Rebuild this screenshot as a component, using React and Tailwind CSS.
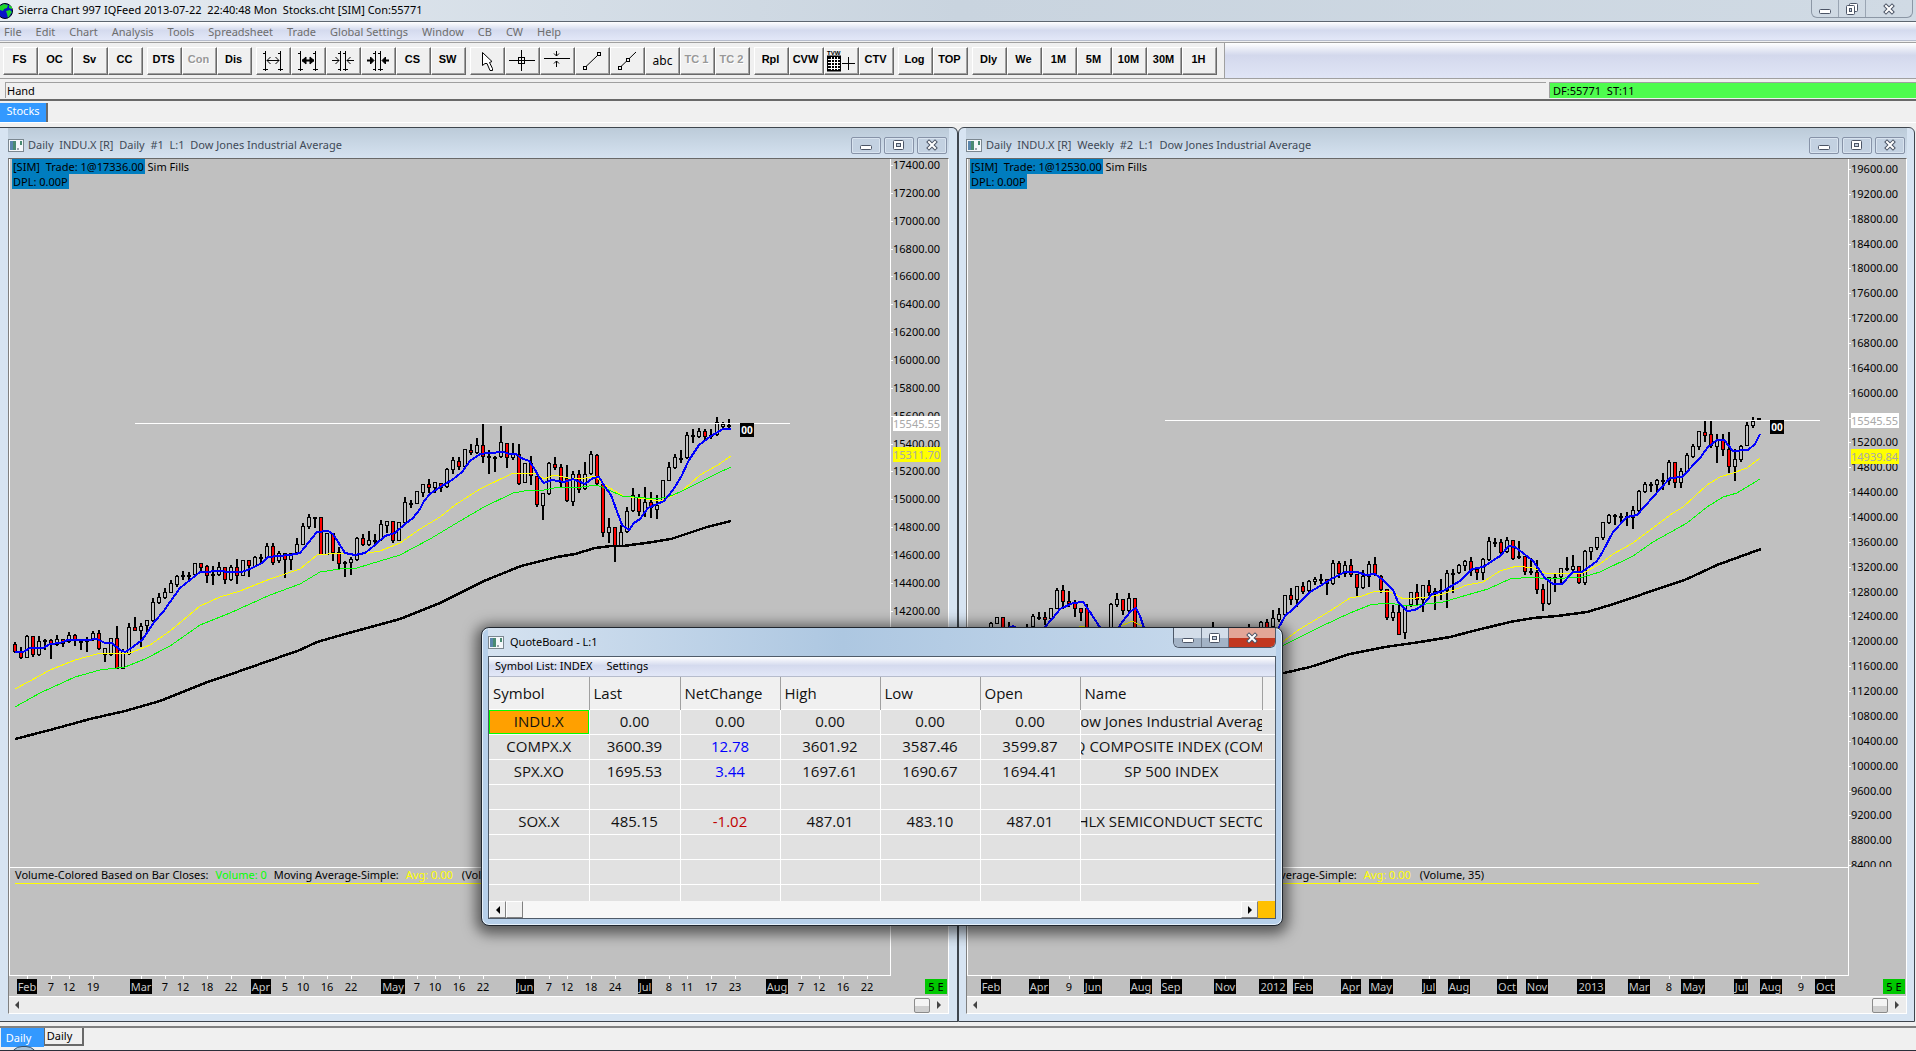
import React from "react";

const LEFT_CANDLES = `642 644 651 652 r|647 651 657 658 r|635 636 657 657|636 636 654 656 r|636 641 654 655|639 640 641 649|639 640 644 658 r|635 639 644 645|639 639 643 646 r|632 635 641 642|634 635 640 645 r|640 641 642 649|637 640 641 651|631 633 639 640|630 633 648 649 r|648 648 654 661|638 638 654 655|626 638 668 668 r|649 651 668 668|623 627 653 654|617 627 630 630 r|623 626 630 646|620 620 625 633|598 602 620 621|593 597 602 603|588 592 597 598|580 583 592 592|575 576 584 586|571 575 576 579|572 575 576 579|563 563 574 575|563 563 567 571 r|565 566 575 582 r|566 574 575 584|562 567 574 575|567 567 579 583 r|565 567 579 580|559 567 575 583 r|560 560 575 575|560 560 565 576 r|556 557 566 566|554 557 558 563|543 546 557 558|543 546 562 564 r|551 553 560 562|553 553 559 577 r|553 553 559 569|538 544 552 553|523 526 544 544|514 517 526 528|517 517 518 527|517 517 554 554 r|533 533 554 554|533 533 552 560 r|547 552 563 568 r|561 562 563 576|557 559 562 574|537 538 559 560|534 538 544 545 r|531 540 544 545|534 540 541 543|520 524 539 540|521 521 525 532|521 521 540 542 r|522 522 540 540|497 502 522 523|500 503 504 507|491 491 503 503|484 484 492 496|479 484 487 492 r|482 482 487 492|483 483 487 491 r|468 469 486 487|457 460 469 473|457 461 466 469 r|449 449 466 467|444 450 452 454 r|438 445 452 453|424 445 456 462 r|450 456 457 473|456 457 458 471|426 442 456 457|443 443 457 467 r|443 453 457 459|444 454 483 484 r|463 463 482 482|456 463 475 484 r|476 476 504 506 r|493 493 505 519|462 463 493 494|457 464 467 469 r|464 467 482 487 r|465 478 500 501 r|471 474 501 505|470 474 489 492 r|462 474 488 489|451 454 473 474|454 455 483 484 r|484 484 532 536 r|518 527 532 542|527 527 546 561 r|525 532 545 545|507 511 531 532|488 495 510 511|494 497 511 515 r|487 502 511 516|492 502 507 517 r|495 505 509 518|480 480 500 500|462 467 480 480|454 457 467 468|450 458 459 462|432 435 457 458|429 435 436 442|428 431 436 437|429 431 436 440 r|429 435 436 438|417 422 434 435|422 424 426 429|419 425 426 427`;

const RIGHT_CANDLES = `622 623 635 640|617 617 623 623|617 617 632 635 r|622 630 631 635|626 628 636 637|628 630 634 638|624 630 634 636|614 616 626 627|612 617 618 619|612 617 619 624 r|608 608 618 620|588 590 608 608|585 590 601 608 r|591 601 603 606 r|600 602 608 616 r|608 608 612 620 r|604 608 632 635 r|630 632 650 655 r|640 642 660 662|636 638 650 655|603 604 630 632|593 599 604 606|599 599 610 614 r|593 598 610 612|598 598 632 635 r|630 632 660 670 r|650 655 670 680|650 655 670 680 r|650 655 670 680|650 655 670 680 r|650 655 670 680|650 655 670 680 r|650 655 670 680|650 655 670 680|650 655 670 680 r|640 645 660 670|635 640 655 660|622 630 640 645|630 634 645 650 r|632 636 645 650|632 636 645 650 r|632 636 640 645|630 634 640 645|624 630 636 640 r|630 632 636 640|621 622 635 635|619 622 627 628 r|610 618 626 627|608 614 619 621|595 595 614 614|588 595 599 604 r|586 586 599 606|582 586 591 593 r|580 581 590 591|577 579 581 584|574 579 580 583|579 579 583 594 r|560 563 583 584|561 563 573 577 r|561 565 573 576|559 565 574 576 r|574 574 587 596 r|570 576 587 588|561 564 576 586|557 564 574 575 r|575 576 589 592 r|589 589 617 619 r|605 612 617 620|603 612 634 634 r|605 605 632 638|592 592 604 606|584 592 599 605 r|585 585 599 611|580 585 592 595 r|588 591 592 609|579 590 591 599|570 573 590 607|569 573 574 592|564 565 572 573|560 561 565 570|557 561 570 575 r|569 569 572 579 r|558 559 572 579|537 541 559 560|538 542 543 546|539 542 552 554 r|537 540 551 552|540 540 558 559 r|541 556 557 558|556 556 571 574 r|558 571 572 574|560 572 589 593 r|584 589 603 610 r|577 577 603 604|574 577 578 591|568 568 576 583|557 568 569 570|555 566 569 570|566 566 582 583 r|550 551 582 584|547 547 551 559|537 537 547 549|522 522 537 539|514 515 522 523|514 515 516 524|513 516 517 522|512 516 517 525|506 510 517 528|490 491 510 511|482 484 491 492|482 484 485 491|479 480 484 491|473 480 481 489|460 462 480 484|462 462 482 487 r|468 471 482 487|453 455 471 472|444 446 456 457|431 431 446 449|421 432 435 441 r|421 434 445 447 r|434 440 446 462|434 440 449 455 r|432 449 466 472 r|449 459 466 480|445 446 459 461|422 425 445 445|417 421 425 427|418 418 419 420`;

const DAILY = {
  title: "Daily  INDU.X [R]  Daily  #1  L:1  Dow Jones Industrial Average",
  trade: "[SIM]  Trade: 1@17336.00",
  originX: 10,
  firstX: 15,
  candles: LEFT_CANDLES,
  blue: "15,652 23,652 30,648 43,648 50,644 60,643 68,640 87,640 97,639 105,643 112,643 120,650 125,652 130,649 142,640 155,621 163,612 170,602 180,588 190,580 200,572 222,571 227,572 242,572 250,569 262,563 268,557 290,555 300,553 317,532 328,531 333,534 345,553 355,555 365,553 375,545 385,536 395,533 405,524 413,518 420,509 424,501 430,494 440,487 452,480 462,472 470,461 480,454 489,453 504,452 509,454 516,454 521,458 529,461 534,468 539,477 544,483 552,480 564,482 573,479 585,484 593,478 599,477 605,487 611,495 622,525 629,530 634,523 640,519 648,508 664,501 673,490 681,477 689,460 699,445 711,436 723,429 731,429",
  yellow: "15,689 30,681 50,670 75,660 97,654 130,653 150,645 170,631 200,606 220,597 240,591 270,579 300,569 317,555 340,553 357,555 380,551 400,543 420,529 440,517 455,505 480,489 513,473 536,473 544,479 554,475 568,478 586,478 595,476 605,485 623,496 661,501 682,491 700,475 718,465 731,456",
  green: "15,707 40,693 75,677 100,670 125,667 145,659 170,646 200,625 230,613 270,595 300,584 320,572 340,569 357,568 380,561 400,555 430,539 460,521 484,507 513,493 530,490 544,490 554,488 582,487 597,485 609,490 622,496 657,499 668,497 680,492 700,482 716,474 731,467",
  black: "15,739 50,730 90,719 125,711 160,701 205,683 240,671 300,650 317,642 345,634 400,619 440,603 484,581 521,566 557,557 575,554 595,548 611,546 623,546 646,543 671,539 707,527 731,521",
  level: { x1: 135, x2: 790, y: 423, boxX: 740 },
  volumeEnd: 731,
  axis: { from: 17400, to: 14000, step: 200, y: 165, gap: 27.85 },
  last: { text: "15545.55", y: 416 },
  average: { text: "15311.70", y: 447 },
  dates: [["Feb", 27], ["7", 51], ["12", 69], ["19", 93], ["Mar", 141], ["7", 165], ["12", 183], ["18", 207], ["22", 231], ["Apr", 261], ["5", 285], ["10", 303], ["16", 327], ["22", 351], ["May", 393], ["7", 417], ["10", 435], ["16", 459], ["22", 483], ["Jun", 525], ["7", 549], ["12", 567], ["18", 591], ["24", 615], ["Jul", 645], ["8", 669], ["11", 687], ["17", 711], ["23", 735], ["Aug", 777], ["7", 801], ["12", 819], ["16", 843], ["22", 867]],
};

const WEEKLY = {
  title: "Daily  INDU.X [R]  Weekly  #2  L:1  Dow Jones Industrial Average",
  trade: "[SIM]  Trade: 1@12530.00",
  originX: 968,
  firstX: 991,
  candles: RIGHT_CANDLES,
  blue: "990,636 1013,626 1030,634 1044,628 1053,618 1060,609 1073,603 1083,602 1090,612 1099,626 1105,634 1115,634 1122,622 1131,611 1136,608 1140,616 1144,628 1150,650 1270,650 1278,629 1285,616 1293,609 1310,592 1325,583 1333,578 1345,572 1357,572 1366,575 1375,574 1383,580 1393,590 1398,602 1407,611 1415,610 1423,605 1432,594 1443,591 1460,581 1472,569 1483,567 1500,556 1509,546 1515,547 1523,553 1533,561 1545,578 1553,584 1562,584 1573,572 1582,572 1597,561 1602,553 1613,532 1627,517 1637,515 1653,497 1670,478 1682,477 1700,458 1708,447 1717,440 1724,440 1733,451 1748,450 1755,444 1760,434",
  yellow: "990,650 1060,632 1083,626 1100,634 1119,627 1132,621 1142,626 1160,650 1270,650 1284,641 1300,629 1330,611 1350,598 1362,596 1376,591 1387,591 1395,594 1403,599 1430,597 1443,594 1467,585 1483,582 1500,571 1517,566 1533,568 1545,573 1583,573 1600,564 1613,554 1633,543 1673,513 1683,507 1707,485 1720,477 1733,473 1747,468 1760,458",
  green: "990,665 1284,645 1320,627 1350,613 1370,605 1387,603 1410,606 1443,602 1467,595 1488,589 1510,579 1533,577 1547,579 1583,577 1600,572 1633,556 1653,542 1687,523 1707,507 1723,497 1737,493 1760,479",
  black: "990,700 1284,673 1310,667 1350,654 1385,647 1420,642 1450,637 1473,631 1510,622 1533,618 1557,616 1587,612 1617,603 1643,594 1687,579 1717,565 1761,549",
  level: { x1: 1165, x2: 1820, y: 420, boxX: 1770 },
  volumeEnd: 1759,
  axis: { from: 19600, to: 8400, step: 400, y: 169, gap: 24.86 },
  last: { text: "15545.55", y: 413 },
  average: { text: "14939.84", y: 449 },
  dates: [["Feb", 991], ["Apr", 1039], ["9", 1069], ["Jun", 1093], ["Aug", 1141], ["Sep", 1171], ["Nov", 1225], ["2012", 1273], ["Feb", 1303], ["Apr", 1351], ["May", 1381], ["Jul", 1429], ["Aug", 1459], ["Oct", 1507], ["Nov", 1537], ["2013", 1591], ["Mar", 1639], ["8", 1669], ["May", 1693], ["Jul", 1741], ["Aug", 1771], ["9", 1801], ["Oct", 1825]],
};

const PLOT_TOP = 159;

function PricePlot({ chart }) {
  const { level } = chart;
  return (
    <svg className="block h-full w-full" shapeRendering="crispEdges" aria-label="Price chart">
      <g transform={`translate(${-chart.originX} ${-PLOT_TOP})`}>
        {chart.candles.split("|").map((row, i) => {
          const [h, t, b, l, red] = row.split(" ");
          const x = chart.firstX + i * 6;
          const height = b - t + 1;
          return (
            <g key={i}>
              <rect x={x - 1} y={h} width="2" height={l - h + 1} fill="#000" />
              <rect x={x - 2} y={t} width="4" height={height} fill="#000" />
              {height > 2 && <rect x={x - 1} y={+t + 1} width="2" height={height - 2} fill={red ? "#f00" : "#c0c0c0"} />}
            </g>
          );
        })}
        <polyline points={chart.black} fill="none" stroke="#000" strokeWidth="2.5" />
        <polyline points={chart.yellow} fill="none" stroke="#ff0" />
        <polyline points={chart.green} fill="none" stroke="#0f0" />
        <polyline points={chart.blue} fill="none" stroke="#00f" strokeWidth="2" />
        <rect x={level.x1} y={level.y} width={level.x2 - level.x1} height="1" fill="#fff" />
        <rect x={level.boxX} y={level.y} width="14" height="14" fill="#000" />
        <text x={level.boxX + 7} y={level.y + 11} textAnchor="middle" className="fill-white font-['Open_Sans',sans-serif] text-[10px] font-bold">00</text>
      </g>
    </svg>
  );
}

function PriceAxis({ chart }) {
  const { axis } = chart;
  const prices = [];
  for (let p = axis.from; p >= axis.to; p -= axis.step) prices.push(p);
  const tags = [
    { ...chart.last, fill: "#fff" },
    { ...chart.average, fill: "#ff0" },
  ];
  return (
    <svg className="block h-full w-full text-[11px]" aria-label="Price axis">
      <g transform={`translate(0 ${-PLOT_TOP})`}>
        {prices.map((p, i) => {
          const y = Math.round(axis.y + i * axis.gap);
          return (
            <g key={p}>
              <rect x="0" y={y} width="2" height="1" fill="#fff" />
              <text x="2" y={y + 4}>{p}.00</text>
            </g>
          );
        })}
        {tags.map((tag) => (
          <g key={tag.text}>
            <rect x="2" y={tag.y} width="48" height="15" fill={tag.fill} />
            <text x="2" y={tag.y + 12} fill="#a8a8a8">{tag.text}</text>
          </g>
        ))}
      </g>
    </svg>
  );
}

function AppIcon() {
  return (
    <svg viewBox="0 0 16 13" className="h-[13px] w-4 shrink-0" aria-hidden="true">
      <rect x="0.5" y="0.5" width="15" height="12" fill="#f4f7fa" stroke="#7b8790" />
      <rect x="2" y="2" width="6" height="9" fill="#4a8a72" />
      <rect x="2" y="2" width="3" height="9" fill="#5a86ad" />
      <rect x="9" y="9" width="2" height="2" fill="#9aa4ac" />
      <rect x="12" y="2" width="2" height="4" fill="#4a8a72" />
    </svg>
  );
}

function CaptionGlyph({ kind }) {
  return (
    <svg viewBox="0 0 14 12" className="h-3 w-3.5" aria-hidden="true">
      {kind === "min" && <rect x="1.5" y="6.5" width="11" height="4" rx="1" fill="#fff" stroke="#4c5566" />}
      {kind === "max" && (
        <g fill="#fff" stroke="#4c5566">
          <rect x="1.5" y="1.5" width="10" height="9" rx="1" />
          <rect x="4.5" y="4.5" width="4" height="3" fill="#c4d0de" />
        </g>
      )}
      {kind === "restore" && (
        <g fill="#fff" stroke="#4c5566">
          <rect x="4.5" y="0.5" width="8" height="8" rx="1" />
          <rect x="1.5" y="2.5" width="8" height="9" rx="1" />
          <rect x="4.5" y="5.5" width="2" height="3" fill="#c4d0de" />
        </g>
      )}
      {kind === "close" && (
        <g strokeLinecap="square">
          <path d="M4 3 L10 9 M10 3 L4 9" stroke="#4c5566" strokeWidth="4" />
          <path d="M4 3 L10 9 M10 3 L4 9" stroke="#fff" strokeWidth="2" />
        </g>
      )}
    </svg>
  );
}

function ScrollBar() {
  return (
    <div className="flex h-[17px] items-center border-t border-white bg-[#ececec] pl-1">
      <button aria-label="Scroll left" className="flex h-4 w-4">
        <svg viewBox="0 0 16 16" className="h-4 w-4"><path d="M6 4v8L2 8z" fill="#444" /></svg>
      </button>
      <div className="flex-1" />
      <button aria-label="Scroll position" className="h-[15px] w-4 rounded-xs border border-[#8b8b8b] bg-linear-to-b from-[#f4f4f4] from-50% to-[#d0d0d0] to-50%" />
      <button aria-label="Scroll right" className="flex h-4 w-[18px]">
        <svg viewBox="0 0 18 16" className="h-4 w-[18px]"><path d="M7 4v8l4 -4z" fill="#444" /></svg>
      </button>
    </div>
  );
}

function ChartWindow({ chart, frame }) {
  return (
    <section className={`flex min-w-0 flex-col border-t border-b border-[#3f464e] bg-[#d7e4f2] pb-[7px] ${frame}`}>
      <header className="flex h-[30px] shrink-0 items-center bg-linear-to-b from-[#bccbd9] to-[#d5e2f0] pt-1 pr-0.5">
        <AppIcon />
        <h2 className="flex-1 truncate pl-1 text-[11px] whitespace-pre text-[#3f4a57]">{chart.title}</h2>
        <div className="flex gap-[3px]">
          {["min", "max", "close"].map((k) => (
            <button key={k} aria-label={k} className="flex h-[17px] w-[30px] items-center justify-center rounded-xs border border-[#8793a8] bg-[#c3d1e1] shadow-[inset_0_0_0_1px_#d8e3ef]">
              <CaptionGlyph kind={k} />
            </button>
          ))}
        </div>
      </header>
      <div className="flex min-h-0 flex-1 flex-col border-t border-l border-r border-b border-t-[#696969] border-r-white border-b-white border-l-[#808080] bg-[#c0c0c0]">
        <div className="flex min-h-0 flex-1 border-l border-white">
          <div className="flex min-w-0 flex-1 flex-col">
            <div className="relative h-[708px] shrink-0">
              <PricePlot chart={chart} />
              <div className="absolute top-0 left-0.5 text-[11px] leading-[15px] whitespace-pre">
                <p><span className="inline-block bg-[#007dbf] px-px">{chart.trade}</span> Sim Fills</p>
                <p><span className="inline-block bg-[#007dbf] px-px">DPL: 0.00P</span></p>
              </div>
            </div>
            <div className="relative min-h-0 flex-1 border-t border-b border-white">
              <div className="flex h-[15px] items-center gap-[7px] pl-[5px] text-[11px] whitespace-pre">
                <span>Volume-Colored Based on Bar Closes:</span>
                <span className="text-[#00ff00]">Volume: 0</span>
                <span>Moving Average-Simple:</span>
                <span className="text-[#ffff00]">Avg: 0.00</span>
                <span className="pl-0.5">(Volume, 35)</span>
              </div>
              <div className="ml-[5px] h-px bg-[#ffff00]" style={{ width: chart.volumeEnd - chart.originX - 5 }} />
            </div>
          </div>
          <div className="flex w-[58px] shrink-0 flex-col border-l border-white">
            <div className="h-[708px] shrink-0"><PriceAxis chart={chart} /></div>
          </div>
        </div>
        <div className="relative h-5 shrink-0 text-[11px] leading-[15px]">
          {chart.dates.map(([label, x]) => (
            <div key={x} className="absolute top-0 flex w-0 flex-col items-center" style={{ left: x - chart.originX + 1 }}>
              <div className="h-[3px] w-px shrink-0 bg-white" />
              <span className={label.length > 2 ? "bg-black px-px text-[#c8c8c8]" : ""}>{label}</span>
            </div>
          ))}
          <div className="flex justify-end pt-[3px] pr-px">
            <span className="w-[22px] bg-[#00c800] text-center">5 E</span>
          </div>
        </div>
        <ScrollBar />
      </div>
    </section>
  );
}

const TOOL_DRAWINGS = {
  spread: <><path d="M7.500 3v20M22.500 3v20M5 5.500h2M5 21.500h5M20 5.500h2M20 21.500h5" /><path d="M9 12.500h12M12.500 9l-3.500 3.500 3.500 3.500M17.500 9l3.500 3.500 -3.500 3.500" /></>,
  spreadBold: <><path d="M7.500 3v20M22.500 3v20M5 5.500h2M5 21.500h5M20 5.500h2M20 21.500h5" /><path d="M9 12.500h12" strokeWidth="2" /><path d="M13 9l-4 3.500 4 3.500zM17 9l4 3.500 -4 3.500z" fill="#000" /></>,
  squeeze: <><path d="M12.500 3v20M17.500 3v20M10 5.500h2M10 21.500h3M15 5.500h2M15 21.500h5" /><path d="M4 12.500h7M7.500 9l3.500 3.500 -3.500 3.500M26 12.500h-7M22.500 9l-3.500 3.500 3.500 3.500" /></>,
  squeezeBold: <><path d="M12.500 3v20M17.500 3v20M10 5.500h2M10 21.500h3M15 5.500h2M15 21.500h5" /><path d="M4 12.500h4M26 12.500h-4" strokeWidth="2" /><path d="M7.500 9l3.500 3.500 -3.500 3.500zM22.500 9l-3.500 3.500 3.500 3.500z" fill="#000" /></>,
  pointer: <path d="M10.500 4.500v13l2.500 -2 2 0 3 7h2.500v-2l-3 -6 2.500 -1z" fill="#fff" />,
  cross: <><path d="M2 12.500h26M14.500 2v21" /><rect x="11.500" y="9.500" width="6" height="6" /></>,
  level: <><path d="M2 10.500h26" /><path d="M14.500 3v5M12 5.500l2.500 2.500 2.500 -2.500M14.500 19v-6M12 15.500l2.500 -2.500 2.500 2.500" /></>,
  line: <><path d="M9 18.500L21 7" /><rect x="6.500" y="18.500" width="3" height="3" /><rect x="20.500" y="4.500" width="3" height="3" /></>,
  ray: <><path d="M9 18.500L24 4" /><rect x="6.500" y="18.500" width="3" height="3" /><rect x="14.500" y="10.500" width="3" height="3" fill="#f0f0f0" /></>,
  sheet: <><rect x="1.500" y="8" width="13" height="15" fill="#000" /><path d="M2 11.500h12M2 14.500h12M2 17.500h12M2 20.500h12M5.500 9v13M8.500 9v13M11.500 9v13" stroke="#fff" /><path d="M16 15.500h13M22.500 9v13" /></>,
};

function ToolIcon({ kind }) {
  return (
    <svg viewBox="0 0 31 26" className="h-[26px] w-[31px] shrink-0" fill="none" stroke="#000" aria-hidden="true">
      {TOOL_DRAWINGS[kind]}
      {kind === "sheet" && <text x="1" y="7" fill="#000" stroke="none" className="font-['Liberation_Sans',sans-serif] text-[6px] font-bold">TVW</text>}
    </svg>
  );
}

const TOOL_GROUPS = [
  ["FS", "OC", "Sv", "CC"],
  ["DTS", "-Con", "Dis"],
  ["#spread", "#spreadBold", "#squeeze", "#squeezeBold", "CS", "SW"],
  ["#pointer", "#cross", "#level", "#line", "#ray", "abc", "-TC 1", "-TC 2"],
  ["Rpl", "CVW", "#sheet", "CTV"],
  ["Log", "TOP"],
  ["Dly", "We", "1M", "5M", "10M", "30M", "1H"],
];

function ToolButton({ item }) {
  const base = "flex h-7 w-[35px] items-center justify-center border border-t-white border-l-white border-r-[#696969] border-b-[#696969] bg-[#f0f0f0] shadow-[inset_-1px_-1px_0_#a0a0a0]";
  if (item[0] === "#") {
    return <button aria-label={item.slice(1)} className={base}><ToolIcon kind={item.slice(1)} /></button>;
  }
  if (item[0] === "-") {
    return <button disabled className={`${base} pr-0.5 pb-0.5 font-['Liberation_Sans',Arial,sans-serif] text-[11px] font-bold text-[#989898] [text-shadow:1px_1px_0_#fff]`}>{item.slice(1)}</button>;
  }
  if (item === "abc") return <button className={`${base} text-[12px]`}>abc</button>;
  return <button className={`${base} pr-0.5 pb-0.5 font-['Liberation_Sans',Arial,sans-serif] text-[11px] font-bold`}>{item}</button>;
}

const QUOTES = [
  ["INDU.X", "0.00", "0.00", "0.00", "0.00", "0.00", "Dow Jones Industrial Average"],
  ["COMPX.X", "3600.39", "12.78", "3601.92", "3587.46", "3599.87", "NASDAQ COMPOSITE INDEX (COMPOSITE)"],
  ["SPX.XO", "1695.53", "3.44", "1697.61", "1690.67", "1694.41", "SP 500 INDEX"],
  ["", "", "", "", "", "", ""],
  ["SOX.X", "485.15", "-1.02", "487.01", "483.10", "487.01", "PHLX SEMICONDUCT SECTOR"],
  ["", "", "", "", "", "", ""],
  ["", "", "", "", "", "", ""],
  ["", "", "", "", "", "", ""],
];

function cellColor(row, col) {
  if (col !== 2) return "text-[#111]";
  if (row[2].startsWith("-")) return "text-[#c00000]";
  return row[2] === "0.00" ? "text-[#111]" : "text-[#0000ff]";
}

function QuoteBoard() {
  return (
    <section className="absolute top-[627px] left-[481px] flex h-[299px] w-[802px] flex-col rounded-lg border border-[#20262e] bg-[#b7d0ea] px-1.5 pb-1.5 shadow-[inset_0_0_0_1px_#e6f1fb,0_3px_14px_5px_rgba(0,0,0,0.55)]">
      <header className="flex h-7 shrink-0 items-center bg-linear-to-r from-[#d5e2f0] via-[#adc7e1] via-45% to-[#cbdcee]">
        <AppIcon />
        <h2 className="flex-1 pl-1.5 text-[11px]">QuoteBoard - L:1</h2>
        <div className="flex h-5 self-start overflow-hidden rounded-b-md border border-t-0 border-[#4d5868]">
          <button aria-label="Minimize" className="flex w-7 items-center justify-center border-r border-[#6b7788] bg-linear-to-b from-[#d3dde9] from-50% to-[#a3b3c6] to-50%"><CaptionGlyph kind="min" /></button>
          <button aria-label="Maximize" className="flex w-[27px] items-center justify-center border-r border-[#6b7788] bg-linear-to-b from-[#d3dde9] from-50% to-[#a3b3c6] to-50%"><CaptionGlyph kind="max" /></button>
          <button aria-label="Close" className="flex w-[46px] items-center justify-center bg-linear-to-b from-[#e3a697] from-50% to-[#c2371f] to-50%"><CaptionGlyph kind="close" /></button>
        </div>
      </header>
      <div className="flex min-h-0 flex-1 flex-col border border-[#4f5b69] bg-[#f0f0f0]">
        <nav className="flex h-5 shrink-0 items-center gap-3.5 border-b border-[#b6bccc] bg-linear-to-b from-white via-[#d4daee] via-45% to-[#e3e8f8] pl-1.5 text-[11px]">
          <button>Symbol List: INDEX</button>
          <button>Settings</button>
        </nav>
        <div className="min-h-0 flex-1 overflow-hidden font-['Open_Sans',sans-serif]">
          <table className="w-full table-fixed border-collapse text-[15px] text-[#111]">
            <colgroup>
              <col className="w-[100px]" />
              <col className="w-[91px]" />
              <col className="w-[100px]" />
              <col className="w-[100px]" />
              <col className="w-[100px]" />
              <col className="w-[100px]" />
              <col className="w-[182px]" />
              <col />
            </colgroup>
            <thead>
              <tr className="h-8">
                {["Symbol", "Last", "NetChange", "High", "Low", "Open", "Name"].map((h) => (
                  <th key={h} scope="col" className="border-r border-[#a0a0a0] bg-[#f0f0f0] pl-1 text-left font-normal">{h}</th>
                ))}
                <td className="bg-[#f0f0f0]" />
              </tr>
            </thead>
            <tbody>
              {QUOTES.map((row, r) => (
                <tr key={r} className="h-[25px] border-t border-white bg-[#e1e1e1]">
                  {row.map((v, c) => (
                    <td key={c} className={`border-white p-0 ${c < 6 ? "border-r" : ""} ${cellColor(row, c)}`}>
                      <div className={`flex h-6 items-center justify-center overflow-hidden whitespace-nowrap ${r === 0 && c === 0 ? "border border-[#00ff00] bg-[#ffa000]" : ""}`}>
                        <span className="shrink-0">{v}</span>
                      </div>
                    </td>
                  ))}
                  <td />
                </tr>
              ))}
            </tbody>
          </table>
        </div>
        <div className="flex h-[17px] shrink-0 bg-[#f7f7f7]">
          <button aria-label="Scroll left" className="flex w-[17px] items-center justify-center border border-t-white border-r-[#808080] border-b-[#808080] border-l-white bg-[#f0f0f0]">
            <svg viewBox="0 0 8 8" className="h-2 w-2"><path d="M6 0v8L2 4z" /></svg>
          </button>
          <button aria-label="Scroll position" className="w-[17px] border border-t-white border-r-[#808080] border-b-[#808080] border-l-white bg-[#f0f0f0]" />
          <div className="flex-1" />
          <button aria-label="Scroll right" className="flex w-[17px] items-center justify-center border border-t-white border-r-[#808080] border-b-[#808080] border-l-white bg-[#f0f0f0]">
            <svg viewBox="0 0 8 8" className="h-2 w-2"><path d="M2 0v8l4 -4z" /></svg>
          </button>
          <div className="w-[17px] bg-[#ffc000]" />
        </div>
      </div>
    </section>
  );
}

export default function App() {
  return (
    <div className="relative flex h-screen flex-col overflow-hidden bg-[#f0f0f0] font-['Noto_Sans','Open_Sans',sans-serif] text-black">
      <header className="flex h-[22px] shrink-0 items-center border-b border-[#5d6670] bg-linear-to-r from-[#e6ecf2] via-[#c9d4df] to-[#d0dae4]">
        <svg viewBox="0 0 14 16" className="h-4 w-3.5" aria-hidden="true">
          <circle cx="5" cy="8" r="7.500" fill="#0a14c8" stroke="#001" />
          <path d="M0 3l4 -2 4 1 -1 3 -3 1 -1 2 -3 -1zM6 8l4 -1 2 2 -2 3 -2 3 -1 -4zM9 2l3 2v2l-3 -1z" fill="#1fd62a" />
        </svg>
        <h1 className="flex-1 pl-1 text-[11px] whitespace-pre">Sierra Chart 997 IQFeed 2013-07-22  22:40:48 Mon  Stocks.cht [SIM] Con:55771</h1>
        <div className="mr-[3px] flex h-[18px] self-start rounded-b-md border border-t-0 border-[#8c97a5]">
          <button aria-label="Minimize" className="flex w-[27px] items-center justify-center border-r border-[#9aa5b3]"><CaptionGlyph kind="min" /></button>
          <button aria-label="Restore" className="flex w-[27px] items-center justify-center border-r border-[#9aa5b3]"><CaptionGlyph kind="restore" /></button>
          <button aria-label="Close" className="flex w-[46px] items-center justify-center"><CaptionGlyph kind="close" /></button>
        </div>
      </header>
      <nav className="flex h-[19px] shrink-0 items-center gap-3.5 border-b border-[#b6bccc] bg-linear-to-b from-white via-[#d4daee] via-45% to-[#e3e8f8] pt-0.5 pl-1 text-[11px] text-[#6d6d6d]">
        {["File", "Edit", "Chart", "Analysis", "Tools", "Spreadsheet", "Trade", "Global Settings", "Window", "CB", "CW", "Help"].map((m) => (
          <button key={m}>{m}</button>
        ))}
      </nav>
      <div className="mt-px flex h-[37px] shrink-0 border-t border-b border-[#a0a0a0]">
        <div className="flex items-center gap-1 border-r border-[#a0a0a0] pr-[7px] pl-[3px]">
          {TOOL_GROUPS.map((g, i) => (
            <div key={i} className="flex">{g.map((t) => <ToolButton key={t} item={t} />)}</div>
          ))}
        </div>
        <div className="flex-1 bg-linear-to-b from-white via-[#d3d8ec] via-35% to-[#e0e5f6]" />
      </div>
      <div className="flex h-[22px] shrink-0 gap-[3px] border-b-2 border-[#696969] pt-[3px] pb-px pl-[5px] text-[11px] leading-[15px]">
        <div className="flex-1 border-t border-l border-[#a0a0a0] pl-px">Hand</div>
        <div className="w-[367px] border-t border-l border-[#a0a0a0] bg-[#4efc4e] pl-[3px] whitespace-pre">DF:55771  ST:11</div>
      </div>
      <div className="flex h-[22px] shrink-0 border-b border-white pt-0.5">
        <button className="w-12 border-r-2 border-[#696969] bg-[#3399ff] pb-1 text-[11px] text-white">Stocks</button>
      </div>
      <main className="mt-1 grid min-h-0 flex-1 grid-cols-2">
        <ChartWindow chart={DAILY} frame="border-r rounded-tr-md pr-2 pl-2" />
        <ChartWindow chart={WEEKLY} frame="mr-px border-x rounded-t-md pr-[7px] pl-[7px]" />
      </main>
      <footer className="relative mt-1 flex h-[25px] shrink-0 items-start overflow-hidden border-t-2 border-b border-t-[#808080] border-b-[#2b2f3a] pl-px text-[11px]">
        <button className="h-[19px] w-[43px] bg-[#3399ff] pt-0.5 pr-2 text-white">Daily</button>
        <button className="h-[18px] w-10 border-r-2 border-b-2 border-l border-[#696969] pr-2">Daily</button>
        <div className="absolute top-[18px] left-2.5 h-6 w-7 rounded-full border border-[#35506b] bg-[#a9c3d9]" />
      </footer>
      <QuoteBoard />
    </div>
  );
}
